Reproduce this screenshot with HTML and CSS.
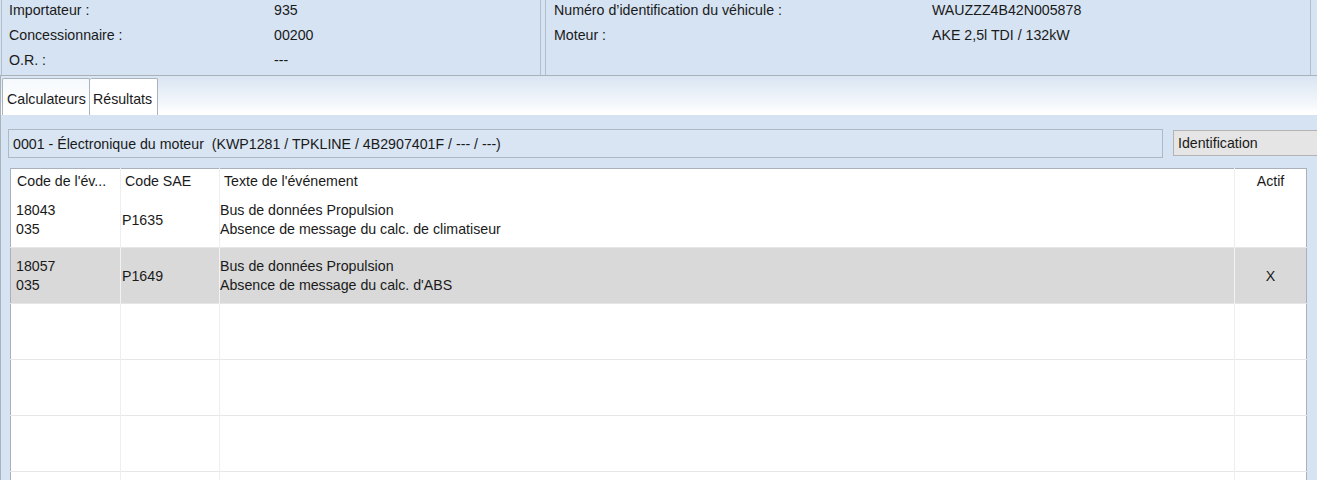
FILE: index.html
```html
<!DOCTYPE html>
<html>
<head>
    <title>Résultats - Mémoire des événements</title>
    <link rel="stylesheet" href="styles.css">
</head>
<body>
    <div class="info-bar">
        <div class="panel panel-left">
            <div class="info-grid">
                <span>Importateur :</span><span>935</span>
                <span>Concessionnaire :</span><span>00200</span>
                <span>O.R. :</span><span>---</span>
            </div>
        </div>
        <div class="panel panel-right">
            <div class="info-grid">
                <span>Numéro d’identification du véhicule :</span><span>WAUZZZ4B42N005878</span>
                <span>Moteur :</span><span>AKE 2,5l TDI / 132kW</span>
            </div>
        </div>
    </div>

    <div class="tab-strip">
        <div class="tab">Calculateurs</div>
        <div class="tab active">Résultats</div>
    </div>

    <div class="content">
        <div class="ecu-row">
            <div class="ecu-title">0001 - Électronique du moteur&nbsp; (KWP1281 / TPKLINE / 4B2907401F / --- / ---)</div>
            <div class="ecu-select">Identification</div>
        </div>

        <table class="events">
            <colgroup>
                <col class="c-code">
                <col class="c-sae">
                <col class="c-text">
                <col class="c-actif">
            </colgroup>
            <thead>
                <tr>
                    <th>Code de l'év...</th>
                    <th>Code SAE</th>
                    <th>Texte de l'événement</th>
                    <th class="center">Actif</th>
                </tr>
            </thead>
            <tbody>
                <tr>
                    <td class="two-line">18043<br>035</td>
                    <td>P1635</td>
                    <td class="two-line">Bus de données Propulsion<br>Absence de message du calc. de climatiseur</td>
                    <td class="center"></td>
                </tr>
                <tr class="selected">
                    <td class="two-line">18057<br>035</td>
                    <td>P1649</td>
                    <td class="two-line">Bus de données Propulsion<br>Absence de message du calc. d'ABS</td>
                    <td class="center">X</td>
                </tr>
                <tr class="empty"><td></td><td></td><td></td><td></td></tr>
                <tr class="empty"><td></td><td></td><td></td><td></td></tr>
                <tr class="empty"><td></td><td></td><td></td><td></td></tr>
                <tr class="empty"><td></td><td></td><td></td><td></td></tr>
            </tbody>
        </table>
    </div>
</body>
</html>
```

FILE: styles.css
```css
body {
    margin: 0;
    font-family: "Liberation Sans", Arial, sans-serif;
    font-size: 14.2px;
    color: #1a1a1a;
    background-color: #d6e3f2;
    height: 480px;
    overflow: hidden;
}
.info-bar {
    display: flex;
    gap: 4px;
    height: 78px;
    margin-top: -2px;
    padding-left: 1px;
    border-bottom: 1px solid #a9b1bb;
    box-sizing: border-box;
}
.panel {
    border: 1px solid #b4bfcb;
    border-top: none;
    border-bottom: none;
    background-color: #d6e3f2;
}
.panel-left {
    width: 540px;
    padding-left: 7px;
    box-sizing: border-box;
}
.panel-right {
    width: 766px;
    padding-left: 8px;
    box-sizing: border-box;
}
.info-grid {
    display: grid;
    line-height: 25px;
}
.panel-left .info-grid {
    grid-template-columns: 265px 1fr;
}
.panel-right .info-grid {
    grid-template-columns: 378px 1fr;
}
.tab-strip {
    display: flex;
    align-items: flex-end;
    height: 39px;
    padding-left: 1px;
    background: linear-gradient(#d9e5f2, #f3f7fb 70%, #ffffff 95%);
    border-left: 1px solid #a9b1bb;
}
.tab {
    width: 88px;
    height: 37px;
    line-height: 40px;
    padding-left: 4px;
    border: 1px solid #a9b4c0;
    border-bottom: none;
    border-radius: 2px 2px 0 0;
    background: linear-gradient(#f6f9fc, #ffffff);
    box-sizing: border-box;
    white-space: nowrap;
}
.tab.active {
    width: 68px;
    background: #ffffff;
    border-left: none;
    padding-left: 3px;
}
.content {
    border-left: 1px solid #a9b1bb;
    padding: 14px 0 0 7px;
}
.ecu-row {
    display: flex;
    align-items: flex-start;
    gap: 10px;
}
.ecu-title {
    width: 1155px;
    height: 29px;
    line-height: 29px;
    padding-left: 4px;
    background-color: #d9e5f3;
    border: 1px solid #aeb9c5;
    box-sizing: border-box;
}
.ecu-select {
    flex: 1;
    height: 26px;
    line-height: 25px;
    margin-top: 1px;
    padding-left: 4px;
    background-color: #e5e5e5;
    border: 1px solid #b3b3b3;
    border-right: none;
    box-sizing: border-box;
}
.events {
    margin: 10px 0 0 2px;
    width: 1297px;
    table-layout: fixed;
    border-collapse: collapse;
    background-color: #ffffff;
    border: 1px solid #a9b1bb;
}
.c-code { width: 110px; }
.c-sae { width: 99px; }
.c-actif { width: 72px; }
.events th {
    height: 23px;
    font-weight: normal;
    text-align: left;
    padding: 0 0 0 4px;
    border-right: 1px solid #eeeeee;
    white-space: nowrap;
}
.events th:first-child {
    padding-left: 6px;
}
.events td {
    height: 55px;
    padding: 0 0 0 3px;
    border-right: 1px solid #eeeeee;
    border-top: 1px solid #e6e6e6;
    vertical-align: middle;
}
.events thead + tbody tr:first-child td {
    border-top: none;
}
.events th:last-child,
.events td:last-child {
    border-right: none;
}
.events .center {
    text-align: center;
    padding: 0;
}
.two-line {
    line-height: 19px;
}
.events tr.selected td {
    background-color: #d9d9d9;
    border-right-color: #f2f2f2;
}
.events td:first-child {
    padding-left: 5px;
}
.events td:nth-child(2) {
    padding-left: 1px;
}
.events td:nth-child(3) {
    padding-left: 0;
}
```
